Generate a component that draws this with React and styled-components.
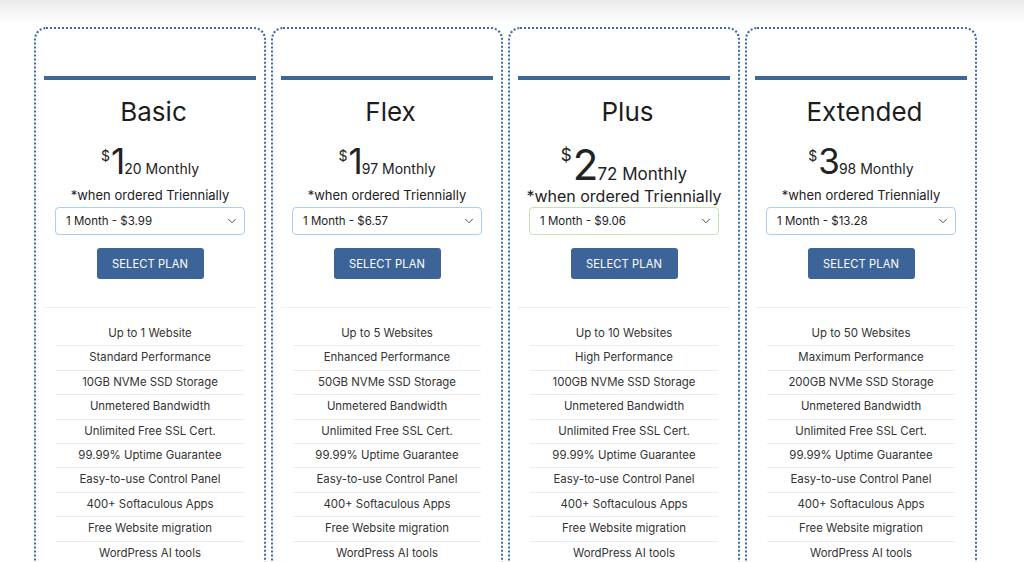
import styled, { createGlobalStyle } from "styled-components";
import { ChevronDown } from "lucide-react";

const GlobalStyle = createGlobalStyle`
  html, body {
    margin: 0;
    padding: 0;
    background: #fff;
  }
  body {
    font-family: Inter, "Noto Sans", sans-serif;
    color: #222;
  }
`;

const Page = styled.div`
  background: linear-gradient(#e9e9e9 0, #f6f6f6 12px, #fff 24px);
  padding: 27px 0 0 34px;
  overflow: hidden;
  height: 562px;
  box-sizing: border-box;
`;

const Grid = styled.div`
  display: grid;
  grid-template-columns: repeat(4, 232px);
  gap: 5px;
`;

const Card = styled.div`
  border: 2px dotted #3b6aa8;
  border-radius: 12px;
  background: #fff;
  padding: 47px 8px 60px;
  display: flex;
  flex-direction: column;
  align-items: center;
  box-sizing: border-box;
`;

const Bar = styled.div`
  align-self: stretch;
  height: 4px;
  background: #3d6699;
`;

const Title = styled.h2`
  margin: 16px 0 0 7px;
  font-size: 26px;
  font-weight: 400;
  line-height: 31px;
  color: #1d1d1d;
`;

const Price = styled.div`
  margin-top: 17px;
  font-size: ${(p) => (p.$big ? 42 : 35)}px;
  line-height: 1;
  color: #222;
  white-space: nowrap;
`;

const Dollar = styled.span`
  font-size: ${(p) => (p.$big ? 17 : 14)}px;
  line-height: 1;
  vertical-align: top;
  position: relative;
  top: ${(p) => (p.$big ? 3 : 5)}px;
  margin-right: 1px;
`;

const Whole = styled.span`
  letter-spacing: -1px;
`;

const Rest = styled.span`
  font-size: ${(p) => (p.$big ? 17 : 14)}px;
  line-height: 1;
`;

const Note = styled.div`
  margin-top: ${(p) => (p.$big ? 1 : 8)}px;
  font-size: ${(p) => (p.$big ? 16 : 13)}px;
  line-height: ${(p) => (p.$big ? 18 : 16)}px;
  color: #222;
  white-space: nowrap;
`;

const SelectWrap = styled.div`
  position: relative;
  margin-top: ${(p) => (p.$big ? 2 : 4)}px;
  width: 190px;
`;

const Select = styled.select`
  appearance: none;
  width: 100%;
  height: 28px;
  padding: 0 24px 0 10px;
  border: 1px solid ${(p) => (p.$green ? "#c6e2b0" : "#a9cdf5")};
  border-radius: 4px;
  background: #fff;
  font-family: Inter, sans-serif;
  font-size: 11.5px;
  color: #1d1d1d;
  outline: none;
`;

const Chevron = styled(ChevronDown)`
  position: absolute;
  right: 6px;
  top: 7px;
  color: #444;
  pointer-events: none;
`;

const Button = styled.button`
  margin-top: 13px;
  width: 107px;
  height: 31px;
  border: none;
  border-radius: 3px;
  background: #3c6499;
  color: #fff;
  font-family: Inter, sans-serif;
  font-size: 11.2px;
  letter-spacing: 0.1px;
  cursor: pointer;
`;

const Features = styled.ul`
  list-style: none;
  margin: 28px 0 0;
  padding: 14px 0 0;
  align-self: stretch;
  border-top: 1px solid #eeeeee;
  display: flex;
  flex-direction: column;
  align-items: center;
`;

const Feature = styled.li`
  width: 188px;
  text-align: center;
  font-size: 11.4px;
  line-height: 15.4px;
  padding: 4px 0;
  color: #333;
  border-bottom: 1px solid #ececec;
  white-space: nowrap;
`;

const common = [
  "Unmetered Bandwidth",
  "Unlimited Free SSL Cert.",
  "99.99% Uptime Guarantee",
  "Easy-to-use Control Panel",
  "400+ Softaculous Apps",
  "Free Website migration",
  "WordPress AI tools",
];

const plans = [
  {
    name: "Basic",
    whole: "1",
    cents: "20",
    option: "1 Month - $3.99",
    features: ["Up to 1 Website", "Standard Performance", "10GB NVMe SSD Storage"],
  },
  {
    name: "Flex",
    whole: "1",
    cents: "97",
    option: "1 Month - $6.57",
    features: ["Up to 5 Websites", "Enhanced Performance", "50GB NVMe SSD Storage"],
  },
  {
    name: "Plus",
    whole: "2",
    cents: "72",
    option: "1 Month - $9.06",
    big: true,
    features: ["Up to 10 Websites", "High Performance", "100GB NVMe SSD Storage"],
  },
  {
    name: "Extended",
    whole: "3",
    cents: "98",
    option: "1 Month - $13.28",
    features: ["Up to 50 Websites", "Maximum Performance", "200GB NVMe SSD Storage"],
  },
];

function PlanCard({ plan }) {
  const big = plan.big;
  return (
    <Card>
      <Bar />
      <Title>{plan.name}</Title>
      <Price $big={big}>
        <Dollar $big={big}>$</Dollar>
        <Whole>{plan.whole}</Whole>
        <Rest $big={big}>{plan.cents} Monthly</Rest>
      </Price>
      <Note $big={big}>*when ordered Triennially</Note>
      <SelectWrap $big={big}>
        <Select $green={big} defaultValue={plan.option}>
          <option>{plan.option}</option>
        </Select>
        <Chevron size={14} strokeWidth={1.6} />
      </SelectWrap>
      <Button>SELECT PLAN</Button>
      <Features>
        {[...plan.features, ...common].map((f) => (
          <Feature key={f}>{f}</Feature>
        ))}
      </Features>
    </Card>
  );
}

export default function App() {
  return (
    <>
      <GlobalStyle />
      <Page>
        <Grid>
          {plans.map((p) => (
            <PlanCard key={p.name} plan={p} />
          ))}
        </Grid>
      </Page>
    </>
  );
}
